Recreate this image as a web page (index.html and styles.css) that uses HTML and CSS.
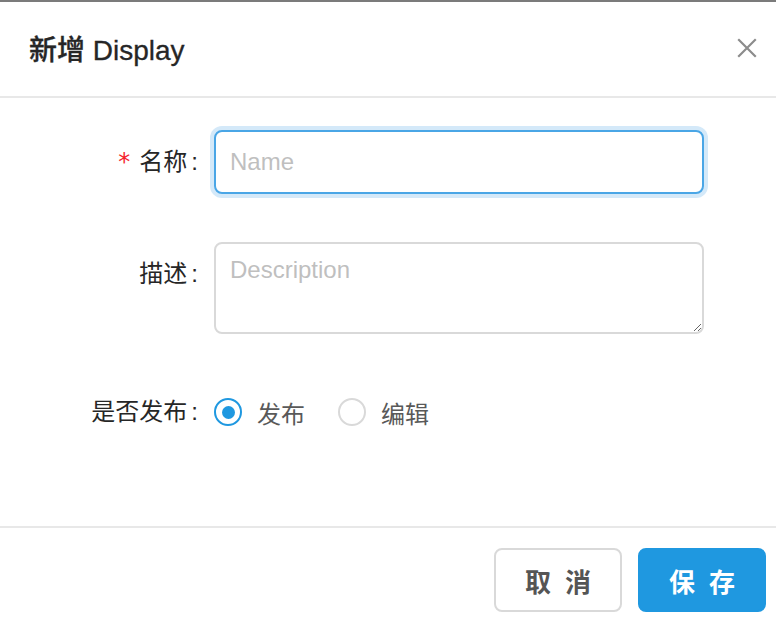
FILE: index.html
```html
<!DOCTYPE html>
<html lang="zh-CN">
<head>
<meta charset="utf-8">
<title>新增 Display</title>
<link rel="stylesheet" href="styles.css">
</head>
<body>
<div class="mask-edge"></div>
<div class="modal">
  <div class="modal-header">
    <div class="modal-title">新增 Display</div>
    <button class="modal-close" aria-label="Close">
      <svg width="20" height="20" viewBox="0 0 20 20"><path d="M2 2 L18 18 M18 2 L2 18" stroke="#8c8c8c" stroke-width="2.2" fill="none" stroke-linecap="square"/></svg>
    </button>
  </div>
  <div class="modal-body">
    <form class="form">
      <div class="form-row">
        <label class="form-label"><span class="required">*</span>名称<span class="colon">:</span></label>
        <div class="form-control">
          <input class="input input-focused" type="text" placeholder="Name">
        </div>
      </div>
      <div class="form-row">
        <label class="form-label">描述<span class="colon">:</span></label>
        <div class="form-control">
          <textarea class="textarea" placeholder="Description"></textarea>
        </div>
      </div>
      <div class="form-row form-row-radio">
        <label class="form-label">是否发布<span class="colon">:</span></label>
        <div class="form-control radios">
          <span class="radio"><span class="radio-circle checked"><span class="radio-dot"></span></span><span class="radio-text">发布</span></span>
          <span class="radio"><span class="radio-circle"></span><span class="radio-text">编辑</span></span>
        </div>
      </div>
    </form>
  </div>
  <div class="modal-footer">
    <button class="btn btn-default">取 消</button>
    <button class="btn btn-primary">保 存</button>
  </div>
</div>
</body>
</html>
```

FILE: styles.css
```css
* { box-sizing: border-box; }
html, body {
  margin: 0;
  padding: 0;
  background: #ffffff;
  width: 776px;
  height: 628px;
  overflow: hidden;
  font-family: "Liberation Sans", "Noto Sans CJK SC", sans-serif;
}
.mask-edge {
  height: 2px;
  background: #7b7b7b;
}
.modal {
  background: #fff;
  border-top-left-radius: 2px;
}
.modal-header {
  height: 96px;
  padding-left: 29px;
  padding-right: 18px;
  display: flex;
  align-items: center;
  justify-content: space-between;
  border-bottom: 2px solid #e8e8e8;
}
.modal-title {
  font-size: 28px;
  font-weight: 500;
  color: #262626;
  padding-bottom: 2px;
  -webkit-text-stroke: 0.3px #262626;
}
.modal-close {
  border: 0;
  background: transparent;
  padding: 0;
  width: 20px;
  height: 20px;
  display: flex;
  margin-top: -2px;
  margin-right: 1px;
}
.modal-body {
  height: 428px;
  padding-top: 32px;
}
.form {
  display: flex;
  flex-direction: column;
  gap: 48px;
}
.form-row {
  display: grid;
  grid-template-columns: 198px 490px;
  column-gap: 16px;
  align-items: start;
}
.form-row-radio {
  margin-top: -2px;
}
.form-label {
  text-align: right;
  font-size: 24px;
  line-height: 64px;
  height: 64px;
  color: #262626;
  white-space: nowrap;
}
.required {
  color: #f5222d;
  font-family: "DejaVu Sans Mono", monospace;
  font-size: 24px;
  margin-right: 8px;
}
.colon {
  margin-left: 4px;
}
.input {
  width: 490px;
  height: 64px;
  border: 2px solid #d9d9d9;
  border-radius: 8px;
  padding: 0 14px;
  font-size: 24px;
  font-family: inherit;
  color: #262626;
  outline: none;
  background: #fff;
}
.input-focused {
  border-color: #4aa6e6;
  box-shadow: 0 0 0 4px rgba(40, 146, 224, 0.2);
}
.input::placeholder, .textarea::placeholder {
  color: #bfbfbf;
}
.textarea {
  display: block;
  width: 490px;
  height: 92px;
  border: 2px solid #d9d9d9;
  border-radius: 8px;
  padding: 8px 14px;
  font-size: 24px;
  line-height: 36px;
  font-family: inherit;
  outline: none;
  resize: vertical;
  margin: 0;
}
.radios {
  display: flex;
  align-items: center;
  height: 64px;
}
.radio {
  display: inline-flex;
  align-items: center;
  margin-right: 33px;
}
.radio-circle {
  width: 28px;
  height: 28px;
  border: 2px solid #d9d9d9;
  border-radius: 50%;
  display: inline-flex;
  align-items: center;
  justify-content: center;
  background: #fff;
}
.radio-circle.checked {
  border-color: #1f98e0;
}
.radio-dot {
  width: 13px;
  height: 13px;
  border-radius: 50%;
  background: #1f98e0;
}
.radio-text {
  font-size: 24px;
  color: #595959;
  margin-left: 15px;
}
.modal-footer {
  border-top: 2px solid #e8e8e8;
  padding: 20px 10px 0 0;
  display: flex;
  justify-content: flex-end;
  gap: 16px;
}
.btn {
  width: 128px;
  height: 64px;
  border-radius: 8px;
  font-size: 26px;
  font-weight: 700;
  font-family: "Noto Sans CJK SC", sans-serif;
  letter-spacing: 4px;
  padding: 0 0 0 4px;
  cursor: pointer;
}
.btn-default {
  background: #fff;
  border: 2px solid #d9d9d9;
  color: #555;
}
.btn-primary {
  background: #1f98e0;
  border: 2px solid #1f98e0;
  color: #fff;
}
```
